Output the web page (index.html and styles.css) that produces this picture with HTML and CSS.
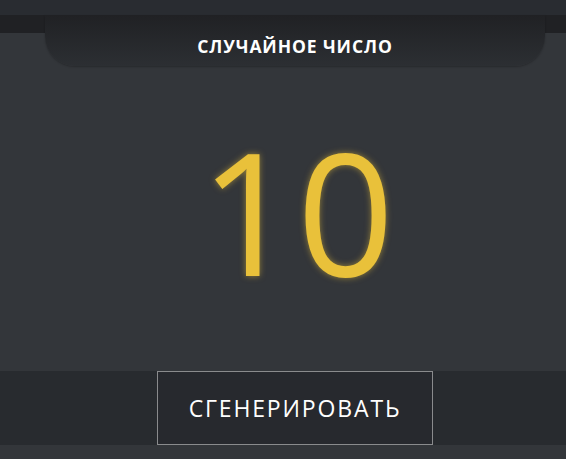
FILE: index.html
```html
<!DOCTYPE html>
<html>
<head>
 <meta charset="utf-8" />
 <title>Случайное число</title>
 <link rel="stylesheet" href="styles.css">
</head>
<body>
 <div class="topbar"></div>
 <div class="band">
  <div class="tab">СЛУЧАЙНОЕ ЧИСЛО</div>
 </div>
 <div class="display">
  <div class="number" id="number">10</div>
 </div>
 <div class="controls">
  <button class="generate" id="generate">СГЕНЕРИРОВАТЬ</button>
 </div>
 <div class="footer"></div>
</body>
</html>
```

FILE: styles.css
```css
* {
 margin: 0;
 padding: 0;
 box-sizing: border-box;
}
body {
 width: 566px;
 height: 459px;
 background: #33363a;
 font-family: "Open Sans", sans-serif;
 overflow: hidden;
}
.topbar {
 height: 15px;
 background: #292c31;
}
.band {
 height: 18px;
 background: #202124;
 position: relative;
}
.tab {
 position: absolute;
 left: 45px;
 top: 0;
 width: 500px;
 height: 51px;
 padding-top: 21px;
 border-radius: 0 0 30px 30px;
 background: linear-gradient(#202124, #2c2f33);
 box-shadow: 0 1px 2px rgba(0, 0, 0, 0.25);
 color: #fff;
 font-weight: 700;
 font-size: 17.5px;
 line-height: 20px;
 letter-spacing: 0.9px;
 text-align: center;
}
.display {
 height: 338px;
 display: flex;
 justify-content: center;
 align-items: center;
 padding-left: 28px;
 padding-top: 16px;
}
.number {
 color: #e9c13a;
 font-size: 170px;
 line-height: 1;
 text-shadow: 0 0 6px rgba(233, 193, 58, 0.55);
}
.controls {
 height: 74px;
 background: #282b2f;
 display: flex;
 padding-left: 157px;
}
.generate {
 width: 276px;
 height: 74px;
 background: #27292e;
 border: 1px solid #8a8b8d;
 color: #fff;
 font-family: "Open Sans", sans-serif;
 font-size: 23px;
 letter-spacing: 1.85px;
 padding-left: 0;
}
.footer {
 height: 14px;
}
```
